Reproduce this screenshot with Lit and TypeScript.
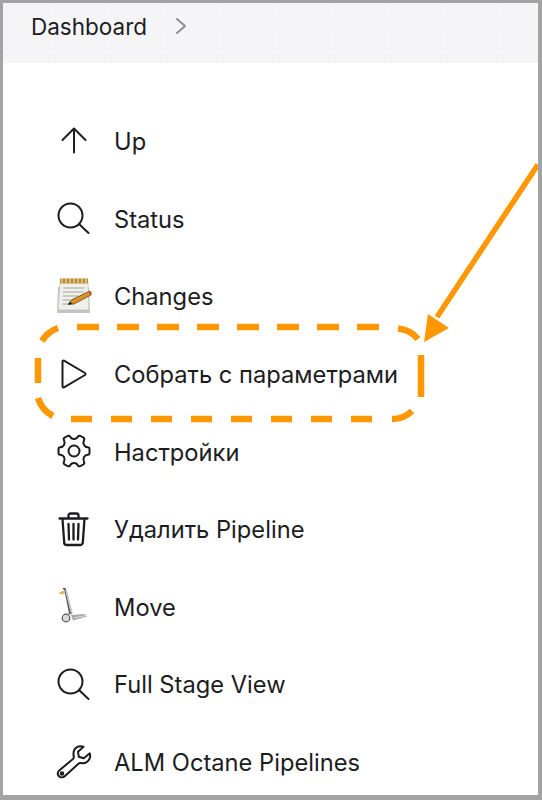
import { LitElement, html, css, svg } from "lit";
import { customElement } from "lit/decorators.js";

const stroke = (inner: unknown, w = 2) => html`<svg class="ico" viewBox="0 0 36 36" fill="none" stroke="#1d1d1f" stroke-width=${w} stroke-linecap="round" stroke-linejoin="round">${inner}</svg>`;

const upIcon = stroke(svg`<path d="M18 29.500V5.500M6.500 17 18 5.500 29.500 17"/>`);
const searchIcon = stroke(svg`<circle cx="14.500" cy="15.500" r="12"/><path d="M23.500 24.500l9 8.500"/>`);
const playIcon = stroke(svg`<path d="M6.500 5.500v25a1 1 0 0 0 1.500.8L29 19a1.200 1.200 0 0 0 0-2L8 4.700a1 1 0 0 0-1.500.8z"/>`);
const gearIcon = stroke(svg`<circle cx="18" cy="18" r="5.500"/><path d="M14 3.500c1 2 2.300 2.500 4 2.500s3-.5 4-2.500c.5-1 1.500-1 2.500-.5l3 1.700c1 .6 1 1.500.5 2.500-1 2-.8 3.300 0 4.800s2 2.200 4 2.300c1 0 1.500.8 1.500 2v3.400c0 1.200-.5 2-1.500 2-2 .1-3.200.8-4 2.300s-1 2.800 0 4.800c.5 1 .5 1.900-.5 2.500l-3 1.700c-1 .5-2 .5-2.500-.5-1-2-2.300-2.500-4-2.500s-3 .5-4 2.500c-.5 1-1.500 1-2.500.5l-3-1.700c-1-.6-1-1.500-.5-2.500 1-2 .8-3.300 0-4.800s-2-2.200-4-2.300c-1 0-1.500-.8-1.500-2v-3.400c0-1.200.5-2 1.500-2 2-.1 3.200-.8 4-2.300s1-2.800 0-4.800c-.5-1-.5-1.900.5-2.500l3-1.700c1-.5 2-.5 2.500.5z"/>`);
const trashIcon = stroke(svg`<path d="M3.500 7.500h28M12.500 7V4.500a2 2 0 0 1 2-2h6a2 2 0 0 1 2 2V7M6.500 8l1.700 23.500a2.500 2.500 0 0 0 2.500 2.500h13.600a2.500 2.500 0 0 0 2.500-2.500L28.500 8M12.500 13l.5 15.500M17.500 13v15.500M22.500 13 22 28.500"/>`, 2.300);
const wrenchIcon = stroke(svg`<path d="M22.500 2.500c2-.5 3.500-.3 5 .3l-5.500 5 .8 5 5 1.500 6-5c.6 2 .5 4-.5 6-1.600 3-5 4.500-8.500 3.800-1-.2-1.700 0-2.400.7L9 32c-1.800 1.800-4.500 1.800-6 .2s-1.500-4 .2-5.800L17 15c.7-.7 1-1.400.7-2.400C17 8 18.500 3.800 22.500 2.500z"/><circle cx="6" cy="29.500" r="1.300"/>`);
const notepadIcon = html`<svg class="ico" viewBox="0 0 36 36">
  <path d="M2 9h31l1 26H1z" fill="#c4c4c4"/>
  <path d="M4 4h28l1 28H2z" fill="#efefeb" stroke="#b8b8b4" stroke-width=".6"/>
  <rect x="4" y="0.500" width="28" height="5" fill="#b5893d"/>
  <path d="M6 .5v5M10 .5v5M14 .5v5M18 .5v5M22 .5v5M26 .5v5M30 .5v5" stroke="#ecd27c" stroke-width="1.500"/>
  <path d="M7.500 10h21M7 14h21M7 18h15M6.500 22h10M6.500 26h6" stroke="#a4a49f" stroke-width="1"/>
  <path d="M12 26.500l3.500-4.500 17-8.500 2.500 3.500-17 9z" fill="#d9912a" stroke="#6b4a17" stroke-width=".8"/>
  <path d="M12 26.500l1.800-2.700 3 2.200z" fill="#222"/>
  <path d="M32.500 13.500l2.500 3.500 1-1.500-2-3z" fill="#c9472d"/>
</svg>`;
const moveIcon = html`<svg class="ico" viewBox="0 0 36 36">
  <path d="M3 4.500 8 2.500 9 5.500 4.500 6.500z" fill="#e3b45c"/>
  <path d="M7 .5 9 1 14 26" stroke="#4f4f4f" stroke-width="1.600" fill="none"/>
  <path d="M10 2 16 26" stroke="#c7c7c7" stroke-width="1.800" fill="none"/>
  <path d="M15 27l14-1 2 2.500-14 4z" fill="#a9a9a6"/>
  <path d="M18 30l12-2.500" stroke="#dcdcdc" stroke-width="1"/>
  <circle cx="10" cy="30" r="3.800" fill="#d9d9d6" stroke="#555" stroke-width="1.200"/>
  <circle cx="14" cy="25" r="1.600" fill="#777"/>
</svg>`;

const items = [
  { icon: upIcon, label: "Up" },
  { icon: searchIcon, label: "Status" },
  { icon: notepadIcon, label: "Changes" },
  { icon: playIcon, label: "Собрать с параметрами" },
  { icon: gearIcon, label: "Настройки" },
  { icon: trashIcon, label: "Удалить Pipeline" },
  { icon: moveIcon, label: "Move" },
  { icon: searchIcon, label: "Full Stage View" },
  { icon: wrenchIcon, label: "ALM Octane Pipelines" },
];

@customElement("app-root")
export class AppRoot extends LitElement {
  static styles = css`
    :host {
      display: block;
      position: relative;
      width: 542px;
      height: 800px;
      box-sizing: border-box;
      overflow: hidden;
      background: #fff;
      border: solid #a3a3a3;
      border-width: 3px 4px 5px 3px;
      font-family: "Inter", "Liberation Sans", sans-serif;
      color: #1d1d1f;
    }
    .crumbs {
      height: 60px;
      box-sizing: border-box;
      background-color: #f5f5f7;
      background-image: radial-gradient(#eeeef0 0.8px, transparent 1px);
      background-size: 7px 7px;
      display: flex;
      align-items: center;
      padding: 0 0 14px 28px;
      gap: 28px;
      font-size: 22.500px;
    }
    .chev {
      width: 12px;
      height: 18px;
    }
    .menu {
      list-style: none;
      margin: 0;
      padding: 39px 0 0 53px;
    }
    .menu li {
      height: 77.600px;
      display: flex;
      align-items: center;
      gap: 22px;
      font-size: 23.700px;
      white-space: nowrap;
    }
    .menu li span {
      padding-top: 2px;
    }
    .ico {
      width: 36px;
      height: 36px;
      flex: none;
    }
    .overlay {
      position: absolute;
      left: -3px;
      top: -3px;
      width: 542px;
      height: 800px;
      pointer-events: none;
    }
  `;

  render() {
    return html`
      <nav class="crumbs">
        <span>Dashboard</span>
        <svg class="chev" viewBox="0 0 12 18" fill="none" stroke="#8e8e93" stroke-width="2" stroke-linecap="round" stroke-linejoin="round"><path d="M2 2l8 7-8 7"/></svg>
      </nav>
      <ul class="menu">
        ${items.map((it) => html`<li>${it.icon}<span>${it.label}</span></li>`)}
      </ul>
      <svg class="overlay" viewBox="0 0 542 800" fill="none" stroke="#ff9800" stroke-width="6.500">
        <path d="M77 327H379" stroke-dasharray="22 18"/>
        <path d="M398 328.500A30 30 0 0 1 418 339"/>
        <path d="M421 355V397"/>
        <path d="M412 411A28 28 0 0 1 392 419"/>
        <path d="M71 419H372" stroke-dasharray="21 19"/>
        <path d="M38 398A30 30 0 0 0 53 416"/>
        <path d="M38 358V383"/>
        <path d="M42 341A30 30 0 0 1 58 328"/>
        <path d="M538 164.500 437 317" stroke-width="5.500"/>
        <path d="M424 342 428 314 449 328z" fill="#ff9800" stroke="none"/>
      </svg>
    `;
  }
}
